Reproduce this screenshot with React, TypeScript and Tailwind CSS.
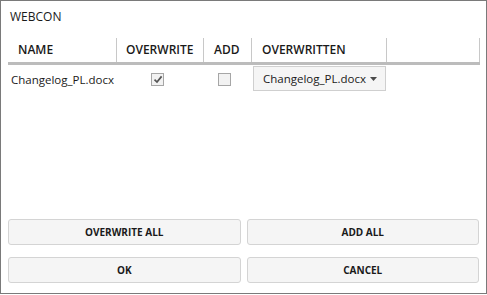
import React from "react";

const font = { fontFamily: '"Open Sans", "Noto Sans", sans-serif' };

function Checkbox({ checked }: { checked?: boolean }) {
  return (
    <div className="w-[13px] h-[13px] border border-[#a6a6a6] bg-[#f2f2f2] flex items-center justify-center">
      {checked && (
        <svg width="10" height="9" viewBox="0 0 10 9">
          <path d="M1.5 4.6 L4 7 L8.6 1.4" fill="none" stroke="#555555" strokeWidth="1.7" />
        </svg>
      )}
    </div>
  );
}

function Btn({ label }: { label: string }) {
  return (
    <div className="flex-1 h-[26px] rounded-[3px] border border-[#d4d4d4] bg-[#f5f5f5] flex items-center justify-center text-[10px] font-bold text-[#1a1a1a]">
      {label}
    </div>
  );
}

export default function App() {
  return (
    <div
      className="w-[487px] h-[294px] border border-[#7a7a7a] bg-white flex flex-col text-[#1a1a1a]"
      style={font}
    >
      <div className="h-[37px] pl-[9px] pt-[8px] text-[12px] leading-[16px]">WEBCON</div>
      <div className="ml-[7px] w-[472px]">
        <div className="flex h-[24px] text-[12px] font-semibold leading-[24px]">
          <div className="w-[108px] pl-[10px]">NAME</div>
          <div className="w-[87px] border-l border-[#c8c8c8] pl-[9px]">OVERWRITE</div>
          <div className="w-[48px] border-l border-[#c8c8c8] pl-[10px]">ADD</div>
          <div className="w-[135px] border-l border-[#c8c8c8] pl-[10px]">OVERWRITTEN</div>
          <div className="w-[94px] border-l border-r border-[#c8c8c8]"></div>
        </div>
        <div className="h-[3px] bg-[#bcbcbc]"></div>
        <div className="flex items-center h-[27px] text-[11.5px]">
          <div className="w-[108px] pl-[3px] pt-[2px]">Changelog_PL.docx</div>
          <div className="w-[87px] pl-[35px] pt-[2px]">
            <Checkbox checked />
          </div>
          <div className="w-[48px] pl-[15px] pt-[2px]">
            <Checkbox />
          </div>
          <div className="w-[135px] pl-[2px]">
            <div className="w-[133px] h-[25px] border border-[#cfcfcf] bg-[#f5f5f5] flex items-center pl-[9px] pr-[10px]">
              <span className="flex-1 whitespace-nowrap">Changelog_PL.docx</span>
              <svg width="7" height="4" viewBox="0 0 7 4" className="ml-[4px] shrink-0">
                <path d="M0 0 L7 0 L3.5 4 Z" fill="#4a4a4a" />
              </svg>
            </div>
          </div>
        </div>
      </div>
      <div className="flex-1"></div>
      <div className="flex flex-col gap-[12px] px-[7px] pb-[10px]">
        <div className="flex gap-[6px]">
          <Btn label="OVERWRITE ALL" />
          <Btn label="ADD ALL" />
        </div>
        <div className="flex gap-[6px]">
          <Btn label="OK" />
          <Btn label="CANCEL" />
        </div>
      </div>
    </div>
  );
}
